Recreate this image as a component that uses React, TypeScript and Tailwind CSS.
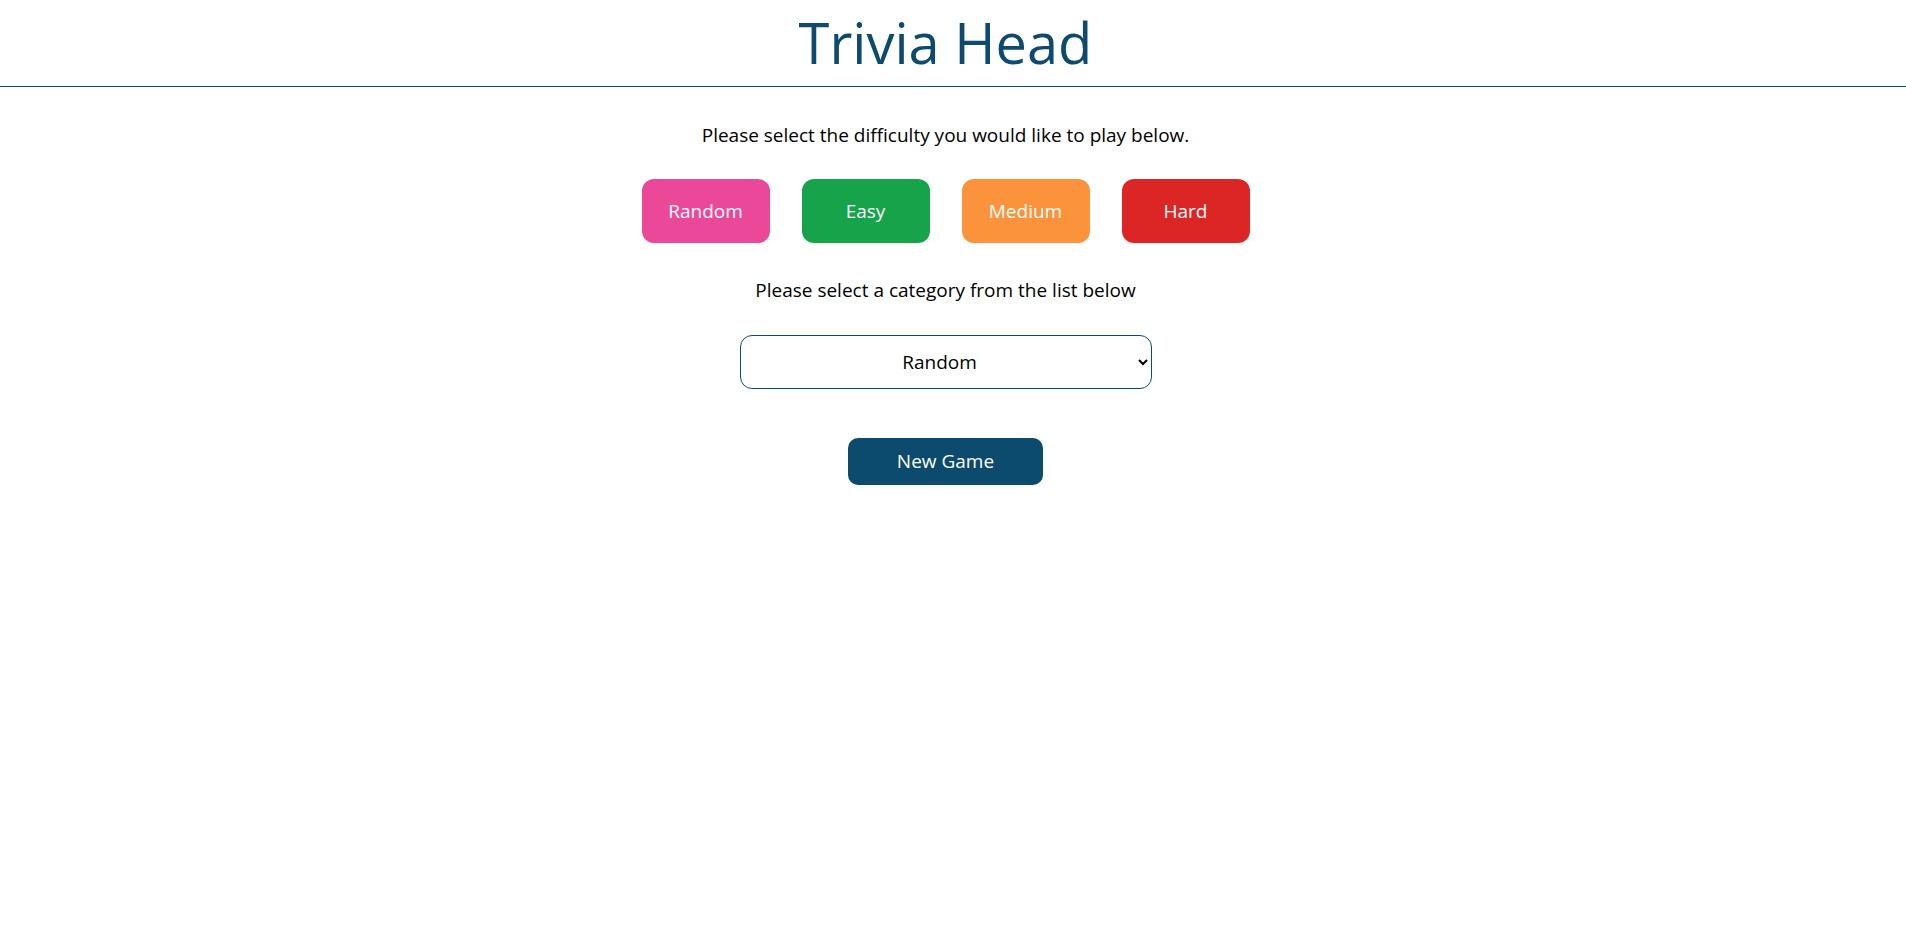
import React, { useState } from "react";

export default function App() {
  const [difficulty, setDifficulty] = useState("random");
  const [category, setCategory] = useState("random");
  const diffs = [
    { id: "random", label: "Random", cls: "bg-[#ec4899]" },
    { id: "easy", label: "Easy", cls: "bg-[#16a34a]" },
    { id: "medium", label: "Medium", cls: "bg-[#fb923c]" },
    { id: "hard", label: "Hard", cls: "bg-[#dc2626]" },
  ];
  return (
    <div className="min-h-screen bg-white text-black font-['Open_Sans','Noto_Sans',sans-serif]">
      <header className="h-[87px] border-b border-[#0c4a6e] pt-[14px] pr-[15px] flex justify-center">
        <h1 className="text-[56px] leading-none font-normal text-[#0c4a6e]">Trivia Head</h1>
      </header>
      <main className="flex flex-col items-center pr-[15px]">
        <p className="mt-[36px] text-[19px] leading-[24px]">
          Please select the difficulty you would like to play below.
        </p>
        <div className="mt-[32px] flex gap-[32px]">
          {diffs.map((d) => (
            <button
              key={d.id}
              onClick={() => setDifficulty(d.id)}
              className={`w-[128px] h-[64px] rounded-[12px] text-white text-[19px] ${d.cls}`}
              aria-pressed={difficulty === d.id}
            >
              {d.label}
            </button>
          ))}
        </div>
        <p className="mt-[35px] text-[19px] leading-[24px]">
          Please select a category from the list below
        </p>
        <select
          value={category}
          onChange={(e) => setCategory(e.target.value)}
          className="mt-[33px] w-[412px] h-[54px] border border-[#0c4a6e] rounded-[12px] text-[19px] text-center [text-align-last:center] px-[8px] bg-white"
        >
          <option value="random">Random</option>
          <option value="9">General Knowledge</option>
          <option value="10">Entertainment: Books</option>
          <option value="11">Entertainment: Film</option>
          <option value="17">Science &amp; Nature</option>
          <option value="21">Sports</option>
          <option value="22">Geography</option>
          <option value="23">History</option>
        </select>
        <button className="mt-[49px] w-[195px] h-[47px] rounded-[10px] bg-[#0c4a6e] text-white text-[19px]">
          New Game
        </button>
      </main>
    </div>
  );
}
